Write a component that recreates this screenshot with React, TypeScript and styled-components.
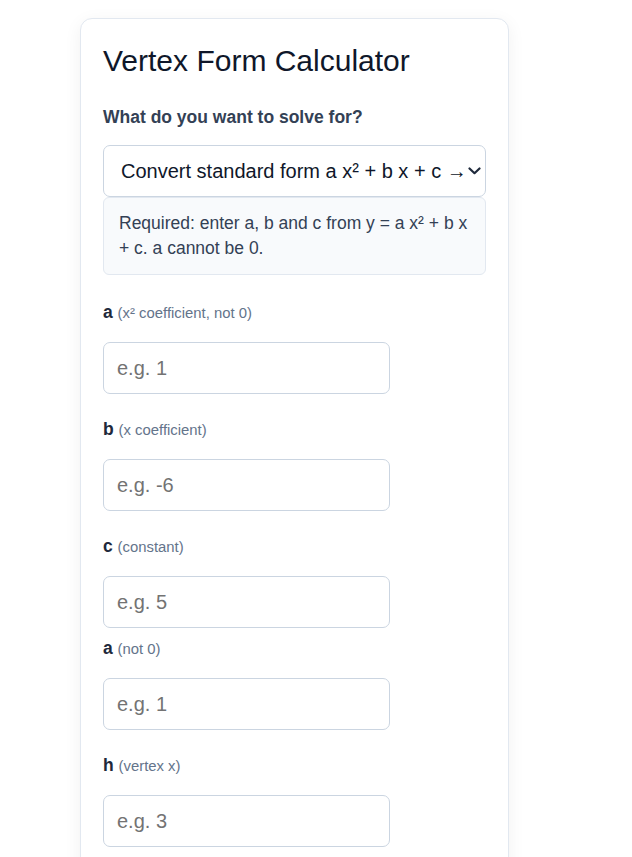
import styled, { createGlobalStyle } from 'styled-components';

const GlobalStyle = createGlobalStyle`
    body {
        margin: 8px;
        background: #ffffff;
        font-family: "Liberation Sans", Arial, sans-serif;
        color: #0f172a;
    }
`;

const Page = styled.div`
    padding: 10px 0 0 72px;
`;

const Card = styled.div`
    width: 429px;
    box-sizing: border-box;
    padding: 25px 22px 40px;
    background: #fff;
    border: 1px solid #e2e8f0;
    border-radius: 12px;
    box-shadow: 0 4px 18px rgba(15, 23, 42, 0.06);
`;

const Title = styled.h1`
    margin: 0 0 29px;
    font-size: 30px;
    font-weight: 400;
    color: #0f172a;
`;

const Question = styled.label`
    display: block;
    font-size: 17.5px;
    font-weight: 700;
    line-height: 20px;
    color: #334155;
    margin-bottom: 18px;
`;

const SelectWrap = styled.div`
    position: relative;

    svg {
        position: absolute;
        right: 5px;
        top: 50%;
        transform: translateY(-50%);
        pointer-events: none;
    }
`;

const Select = styled.select`
    display: block;
    width: 100%;
    height: 52px;
    box-sizing: border-box;
    padding: 0 20px 0 17px;
    appearance: none;
    font-family: "Liberation Sans", Arial, sans-serif;
    font-size: 20px;
    color: #0f172a;
    background: #fff;
    border: 1px solid #cbd5e1;
    border-radius: 7px;
`;

const Info = styled.div`
    box-sizing: border-box;
    padding: 13px 15px;
    background: #f8fafc;
    border: 1px solid #e2e8f0;
    border-radius: 6px;
    font-size: 17.5px;
    line-height: 25px;
    color: #334155;
    margin-bottom: 27px;
`;

const Section = styled.div`
    display: flex;
    flex-direction: column;
    gap: 25px;
    & + & {
        margin-top: 10px;
    }
`;

const Field = styled.div`
    display: flex;
    flex-direction: column;
`;

const Label = styled.label`
    display: block;
    height: 20px;
    font-size: 17.5px;
    font-weight: 700;
    line-height: 20px;
    color: #1e293b;
    margin-bottom: 20px;

    span {
        font-size: 0.85em;
        font-weight: 400;
        color: #64748b;
    }
`;

const Input = styled.input`
    width: 75%;
    height: 52px;
    box-sizing: border-box;
    padding: 0 13px;
    font-family: "Liberation Sans", Arial, sans-serif;
    font-size: 20px;
    color: #0f172a;
    border: 1px solid #cbd5e1;
    border-radius: 7px;
    background: #fff;

    &::placeholder {
        color: #737373;
    }
`;

type FieldDef = { name: string; hint: string; placeholder: string };

const standard: FieldDef[] = [
    { name: 'a', hint: '(x² coefficient, not 0)', placeholder: 'e.g. 1' },
    { name: 'b', hint: '(x coefficient)', placeholder: 'e.g. -6' },
    { name: 'c', hint: '(constant)', placeholder: 'e.g. 5' },
];

const vertex: FieldDef[] = [
    { name: 'a', hint: '(not 0)', placeholder: 'e.g. 1' },
    { name: 'h', hint: '(vertex x)', placeholder: 'e.g. 3' },
    { name: 'k', hint: '(vertex y)', placeholder: 'e.g. -4' },
];

const FieldGroup = ({ fields }: { fields: FieldDef[] }) => (
    <Section>
        {fields.map((f) => (
            <Field key={f.name + f.hint}>
                <Label>
                    {f.name} <span>{f.hint}</span>
                </Label>
                <Input type="text" placeholder={f.placeholder} />
            </Field>
        ))}
    </Section>
);

const Chevron = () => (
    <svg width="13" height="8" viewBox="0 0 13 8" fill="none">
        <path d="M1.5 1.5 L6.5 6.2 L11.5 1.5" stroke="#1e293b" strokeWidth="2.2" strokeLinecap="round" strokeLinejoin="round" />
    </svg>
);

export default function App() {
    return (
        <Page>
            <GlobalStyle />
            <Card>
                <Title>Vertex Form Calculator</Title>
                <Question>What do you want to solve for?</Question>
                <SelectWrap>
                    <Select defaultValue="std">
                        <option value="std">Convert standard form a x² + b x + c → vertex form</option>
                        <option value="vtx">Convert vertex form a (x − h)² + k → standard form</option>
                    </Select>
                    <Chevron />
                </SelectWrap>
                <Info>Required: enter a, b and c from y = a x² + b x + c. a cannot be 0.</Info>
                <FieldGroup fields={standard} />
                <FieldGroup fields={vertex} />
            </Card>
        </Page>
    );
}
